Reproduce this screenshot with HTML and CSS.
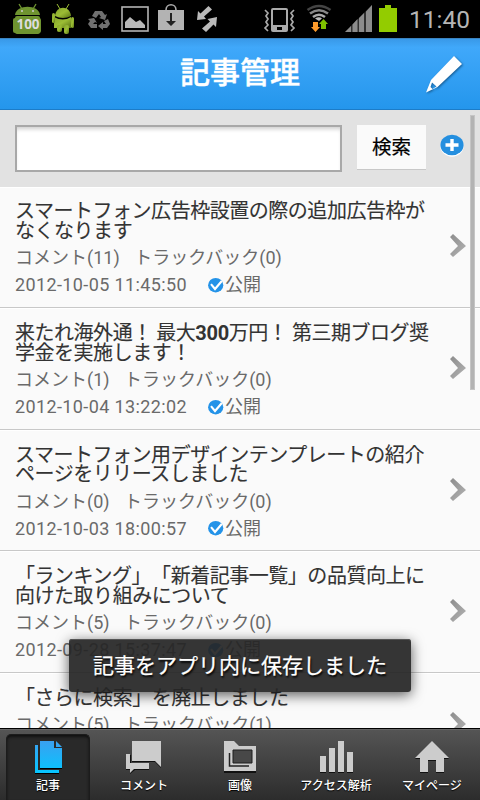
FILE: index.html
```html
<!DOCTYPE html>
<html lang="ja">
<head>
<meta charset="utf-8">
<title>記事管理</title>
<link rel="stylesheet" href="styles.css">
</head>
<body>
<svg class="defs" width="0" height="0">
  <defs>
    <linearGradient id="chev" x1="0" y1="0" x2="1" y2="1"><stop offset="0" stop-color="#8c8c8c"/><stop offset="1" stop-color="#b4b4b4"/></linearGradient>
    <linearGradient id="blue" gradientUnits="userSpaceOnUse" x1="0" y1="0" x2="0" y2="32"><stop offset="0" stop-color="#3aa0f0"/><stop offset="1" stop-color="#06c6ff"/></linearGradient>
    <linearGradient id="droid" x1="0" y1="0" x2="1" y2="1"><stop offset="0" stop-color="#86a52c"/><stop offset=".5" stop-color="#9cbd35"/><stop offset="1" stop-color="#587313"/></linearGradient>
    <symbol id="arrow" viewBox="0 0 18 26"><path d="M3 1L16 13L3 24L0 21L8 13L0 4Z" fill="url(#chev)"/></symbol>
    <symbol id="check" viewBox="0 0 16 16"><ellipse cx="7.7" cy="8.2" rx="7.6" ry="7.3" fill="#2493e8"/><path d="M3 7.2L7 12L13.8 4" fill="none" stroke="#fff" stroke-width="2.1"/></symbol>
  </defs>
</svg>
<div class="screen">
  <div class="status">
    <svg class="status-icons" width="240" height="38" viewBox="0 0 240 38">
      <g fill="#6f9430">
        <path d="M15 15C16 4 39 4 40 15Z"/><path d="M19 4L22 9M36 4L33 9" stroke="#6f9430" stroke-width="1.3"/>
        <rect x="13" y="18" width="28" height="15" rx="2"/><rect x="15" y="16" width="25" height="18" rx="2"/>
      </g>
      <circle cx="22" cy="11" r="1" fill="#ccc"/><circle cx="33" cy="11" r="1" fill="#ccc"/>
      <text class="badge" x="28" y="29" text-anchor="middle">100</text>
      <g fill="url(#droid)">
        <path d="M55 16C56 5 70 5 71 16Q63 20 55 16Z"/><path d="M57 4L60 9M69 4L66 9" stroke="#9cbd35"/>
        <path d="M54 17Q63 22 71 17V28H54Z"/><rect x="52" y="13" width="3" height="10" rx="1.5"/><rect x="71" y="17" width="3" height="11" rx="1.5"/><rect x="57" y="25" width="5" height="7" rx="2"/><rect x="64" y="25" width="5" height="9" rx="2"/>
      </g>
      <g fill="#707070">
        <path d="M95 11H102L105 15L107 14L105 20L99 18L101 17L99 14L96 18L92 16Z"/>
        <path d="M104 21L108 19L110 24L107 28H103V30L98 26L103 22V24H106Z"/>
        <path d="M88 19L94 18L97 23L95 22L93 24H97V28H91L88 24L90 21Z"/>
      </g>
      <rect x="122" y="7" width="26" height="24" fill="none" stroke="#b4b4b4" stroke-width="1.6"/>
      <path d="M125 28V22L130 17L136 22L140 20L145 25V28Z" fill="#b8b8b8"/>
      <path d="M166 10C166 3 176 3 176 10" fill="none" stroke="#aaa" stroke-width="1.6"/>
      <rect x="158" y="10" width="26" height="20" fill="#b3b3b3"/>
      <path d="M170 13H172V21H176L171 26L166 21H170Z" fill="#222"/>
      <path d="M208.500 6L212 9.500L204 16.500L206 19L197 20L198 11L200.500 13.500ZM217 17L216 27L213.500 24.500L206 32L202 28.500L210 21.500L207.500 19Z" fill="#bababa"/>
    </svg>
    <svg class="status-icons" width="164" height="38" viewBox="240 0 164 38">
      <path fill-rule="evenodd" d="M273 8H286Q288 8 288 10V30Q288 32 286 32H273Q271 32 271 30V10Q271 8 273 8ZM273 10V25H286V10ZM277 27V30H282V27Z" fill="#aaa"/>
      <path d="M265 10L268 13L266 16L268 19L266 22L268 25L265 28L268 31M294 10L291 13L293 16L291 19L293 22L291 25L294 28L291 31" fill="none" stroke="#aaa" stroke-width="1.7"/>
      <g fill="none" stroke-width="2.600"><path d="M307.500 10Q319 2 330.500 10" stroke="#444"/><path d="M310 13.500Q319 7 328 13.500" stroke="#888"/><path d="M313 17Q319 12.500 325 17" stroke="#aaa"/></g>
      <path d="M315 18.500Q319 16 322 18.500L319 21Z" fill="#bbb"/>
      <path d="M313 22H318V27H320L315.500 32L311 27H313Z" fill="#ff9c2c"/><path d="M321 29V24H319L323.500 19L328 24H326V29Z" fill="#7fc100"/>
      <path d="M345 32L351 26V32ZM352.500 32V24.500L357.500 19V32ZM359 32V18L364 13V32ZM366 32V11.500L372 5V32Z" fill="#8c8c8c"/>
      <path d="M345 32L372 5V32Z" fill="#8c8c8c" opacity=".35"/>
      <path d="M379 8H385V5H391V8H397V32H379Z" fill="#93cc00"/>
    </svg>
    <span class="clock">11:40</span>
  </div>
  <header class="header">
    <h1>記事管理</h1>
    <svg class="pencil" width="40" height="40" viewBox="0 0 40 40"><path fill-rule="evenodd" d="M30 0L38 8L13.500 31L2 36.500L7 24ZM8 26.500L6.500 31L8.500 33L12.500 30.500Z" fill="#fff"/></svg>
  </header>
  <main class="content">
    <div class="search">
      <div class="field"></div>
      <div class="button">検索</div>
      <svg class="add" width="24" height="23" viewBox="0 0 24 23"><ellipse cx="12" cy="12" rx="11.700" ry="10.700" fill="#fff"/><ellipse cx="12" cy="11" rx="11.600" ry="10.300" fill="#258fdf"/><path d="M12 5V17M5.500 11H18.500" stroke="#fff" stroke-width="3.400"/></svg>
    </div>
    <article class="item">
      <div class="text"><h2>スマートフォン広告枠設置の際の追加広告枠が<br>なくなります</h2><p class="meta"><span>コメント(11)</span><span>トラックバック(0)</span></p><p class="date"><span class="time">2012-10-05 11:45:50</span><svg width="16" height="16"><use href="#check"/></svg><span>公開</span></p></div>
      <svg class="arrow" width="18" height="26"><use href="#arrow"/></svg>
    </article>
    <article class="item">
      <div class="text"><h2>来たれ海外通！<span class="gap"></span>最大<b>300</b>万円！<span class="gap"></span>第三期ブログ奨<br>学金を実施します！</h2><p class="meta"><span>コメント(1)</span><span>トラックバック(0)</span></p><p class="date"><span class="time">2012-10-04 13:22:02</span><svg width="16" height="16"><use href="#check"/></svg><span>公開</span></p></div>
      <svg class="arrow" width="18" height="26"><use href="#arrow"/></svg>
    </article>
    <article class="item">
      <div class="text"><h2>スマートフォン用デザインテンプレートの紹介<br>ページをリリースしました</h2><p class="meta"><span>コメント(0)</span><span>トラックバック(0)</span></p><p class="date"><span class="time">2012-10-03 18:00:57</span><svg width="16" height="16"><use href="#check"/></svg><span>公開</span></p></div>
      <svg class="arrow" width="18" height="26"><use href="#arrow"/></svg>
    </article>
    <article class="item">
      <div class="text"><h2>「ランキング」「新着記事一覧」の品質向上に<br>向けた取り組みについて</h2><p class="meta"><span>コメント(5)</span><span>トラックバック(0)</span></p><p class="date"><span class="time">2012-09-28 15:37:47</span><svg width="16" height="16"><use href="#check"/></svg><span>公開</span></p></div>
      <svg class="arrow" width="18" height="26"><use href="#arrow"/></svg>
    </article>
    <article class="item short">
      <div class="text"><h2>「さらに検索」を廃止しました</h2><p class="meta"><span>コメント(5)</span><span>トラックバック(1)</span></p></div>
      <svg class="arrow" width="18" height="26"><use href="#arrow"/></svg>
    </article>
    <div class="scrollbar"></div>
  </main>
  <nav class="tabs">
    <div class="tab active"><svg width="36" height="36" viewBox="0 0 36 36"><path d="M5 5H8V30H29V33H5Z" fill="#000"/><path d="M5 4H8V29H29V32H5Z" fill="url(#blue)"/><path d="M10 1H24V8H32V28H10Z" fill="#000"/><path d="M10 0H24V7H32V27H10Z" fill="url(#blue)"/><path d="M26 0L32 6H26Z" fill="url(#blue)"/></svg><span>記事</span></div>
    <div class="tab"><svg width="36" height="36" viewBox="0 0 36 36"><path d="M0 14H5V23H23V29H9L4 33V29H0ZM6 1H35V27L29 21H6Z" fill="#111"/><path d="M0 13H4V22H23V28H8L4 32V28H0ZM6 0H35V26L29 20H6Z" fill="#ccc"/></svg><span>コメント</span></div>
    <div class="tab"><svg width="36" height="36" viewBox="0 0 36 36"><path d="M2 1H12L17 6H34V32H2Z" fill="#111"/><path d="M2 0H12L17 5H34V30H2Z" fill="#ccc"/><path d="M11 9H30V22H11Z" fill="#484848" stroke="#1c1c1c"/><path d="M7.500 12V25H27" fill="none" stroke="#222" stroke-width="1.500"/></svg><span>画像</span></div>
    <div class="tab"><svg width="36" height="36" viewBox="0 0 36 36"><path d="M2 16H8V32H2ZM11 8H17V32H11ZM20 1H26V32H20ZM29 12H35V32H29Z" fill="#111"/><path d="M2 15H8V31H2ZM11 7H17V31H11ZM20 0H26V31H20ZM29 11H35V31H29Z" fill="#ccc"/></svg><span>アクセス解析</span></div>
    <div class="tab"><svg width="36" height="36" viewBox="0 0 36 36"><path d="M18 1L35 18H30V32H22V20H14V32H6V18H1Z" fill="#111"/><path d="M18 0L35 17H30V31H22V19H14V31H6V17H1Z" fill="#ccc"/></svg><span>マイページ</span></div>
  </nav>
  <div class="toast">記事をアプリ内に保存しました</div>
</div>
</body>
</html>
```
FILE: styles.css
```css
* { box-sizing: border-box; }
body { margin: 0; background: #000; font-family: Roboto, "Noto Sans CJK JP", sans-serif; text-spacing-trim: space-all; }
h1, h2, p { margin: 0; }
svg { display: block; flex: none; }
.defs { position: absolute; }
.screen { position: relative; width: 480px; height: 800px; overflow: hidden; display: flex; flex-direction: column; }
.status { flex: none; display: flex; height: 38px; background: #000; }
.badge { font: bold 13.5px "Open Sans", sans-serif; fill: #ddd; }
.clock { margin-left: 5px; color: #b5b5b5; font-size: 24.5px; line-height: 39px; white-space: nowrap; }
.header { position: relative; flex: none; height: 72px; border-top: 1px solid #3b83c0; border-bottom: 1px solid #1c7cc8; background: linear-gradient(#3999e8, #40a8fa 12%, #2496ec); }
.header h1 { color: #fff; font-size: 30px; line-height: 67px; font-weight: 500; -webkit-text-stroke: .4px #fff; text-align: center; white-space: nowrap; }
.pencil { position: absolute; left: 424px; top: 17px; filter: drop-shadow(1px 1px 1px #165b92); }
.content { position: relative; flex: none; height: 618px; overflow: hidden; background: #fafafa; }
.search { display: flex; height: 77px; padding: 15px 0 0 15px; background: #e2e2e2; }
.field { width: 327px; height: 47px; border: 2px solid #a8a8a8; background: #fff; box-shadow: inset 0 4px 4px -2px #ccc; }
.button { width: 69px; height: 45px; margin-left: 15px; background: #fafafa; border-bottom: 1px solid #c8c8c8; color: #000; text-align: center; font-size: 19.5px; line-height: 46px; -webkit-text-stroke: .2px #000; }
.add { margin: 9px 0 0 14px; }
.item { display: flex; justify-content: space-between; height: 121.5px; padding: 15px 12px 0 15px; border-top: 1px solid #fff; border-bottom: 1px solid #c8c8c8; }
.search + .item { height: 121px; padding-top: 14px; }
.item h2 { color: #333; font-size: 20px; line-height: 19.5px; letter-spacing: -.47px; font-weight: 400; -webkit-text-stroke: .12px #333; white-space: nowrap; }
.item h2 b { font-weight: 700; letter-spacing: -.3px; -webkit-text-stroke: 0; }
.gap { display: inline-block; width: 4.5px; }
.meta { display: flex; gap: 14.5px; margin-top: 3px; color: #6a6a6a; font-size: 18px; line-height: 27px; white-space: nowrap; }
.date { display: flex; align-items: center; color: #6a6a6a; font-size: 18px; line-height: 27px; white-space: nowrap; }
.time { width: 193px; letter-spacing: .38px; }
.date svg { margin-right: 1px; }
.arrow { margin-top: 31px; }
.short .arrow { margin-top: 22px; }
.scrollbar { position: absolute; left: 470px; top: 5px; width: 5px; height: 275px; background: #b3b3b3; border: 1px solid #c5c5c5; }
.tabs { flex: none; height: 72px; display: grid; grid-template-columns: repeat(5, 1fr); border-top: 1px solid #000; background: linear-gradient(#555, #2c2c2c); box-shadow: inset 0 1px #666; }
.tab { display: flex; flex-direction: column; align-items: center; padding-top: 12px; color: #fff; font-size: 12px; line-height: 18px; font-weight: 500; white-space: nowrap; text-shadow: 0 1px 1px #000; }
.active { margin: 5px 6px 0; padding-top: 7px; border: 1px solid #1c1c1c; border-bottom: 0; border-radius: 5px 5px 0 0; background: #292929; box-shadow: inset 0 2px 3px #111; }
.active svg { margin-top: -1px; }
.toast { position: absolute; left: 69px; top: 639px; width: 342px; height: 53px; border-radius: 3px; background: rgba(38, 38, 38, .93); box-shadow: 0 3px 13px rgba(0, 0, 0, .65), inset 0 1px #555; color: #fff; font-size: 21px; line-height: 55px; -webkit-text-stroke: .25px #fff; text-align: center; white-space: nowrap; text-shadow: 1px 2px 2px #000; }
```
